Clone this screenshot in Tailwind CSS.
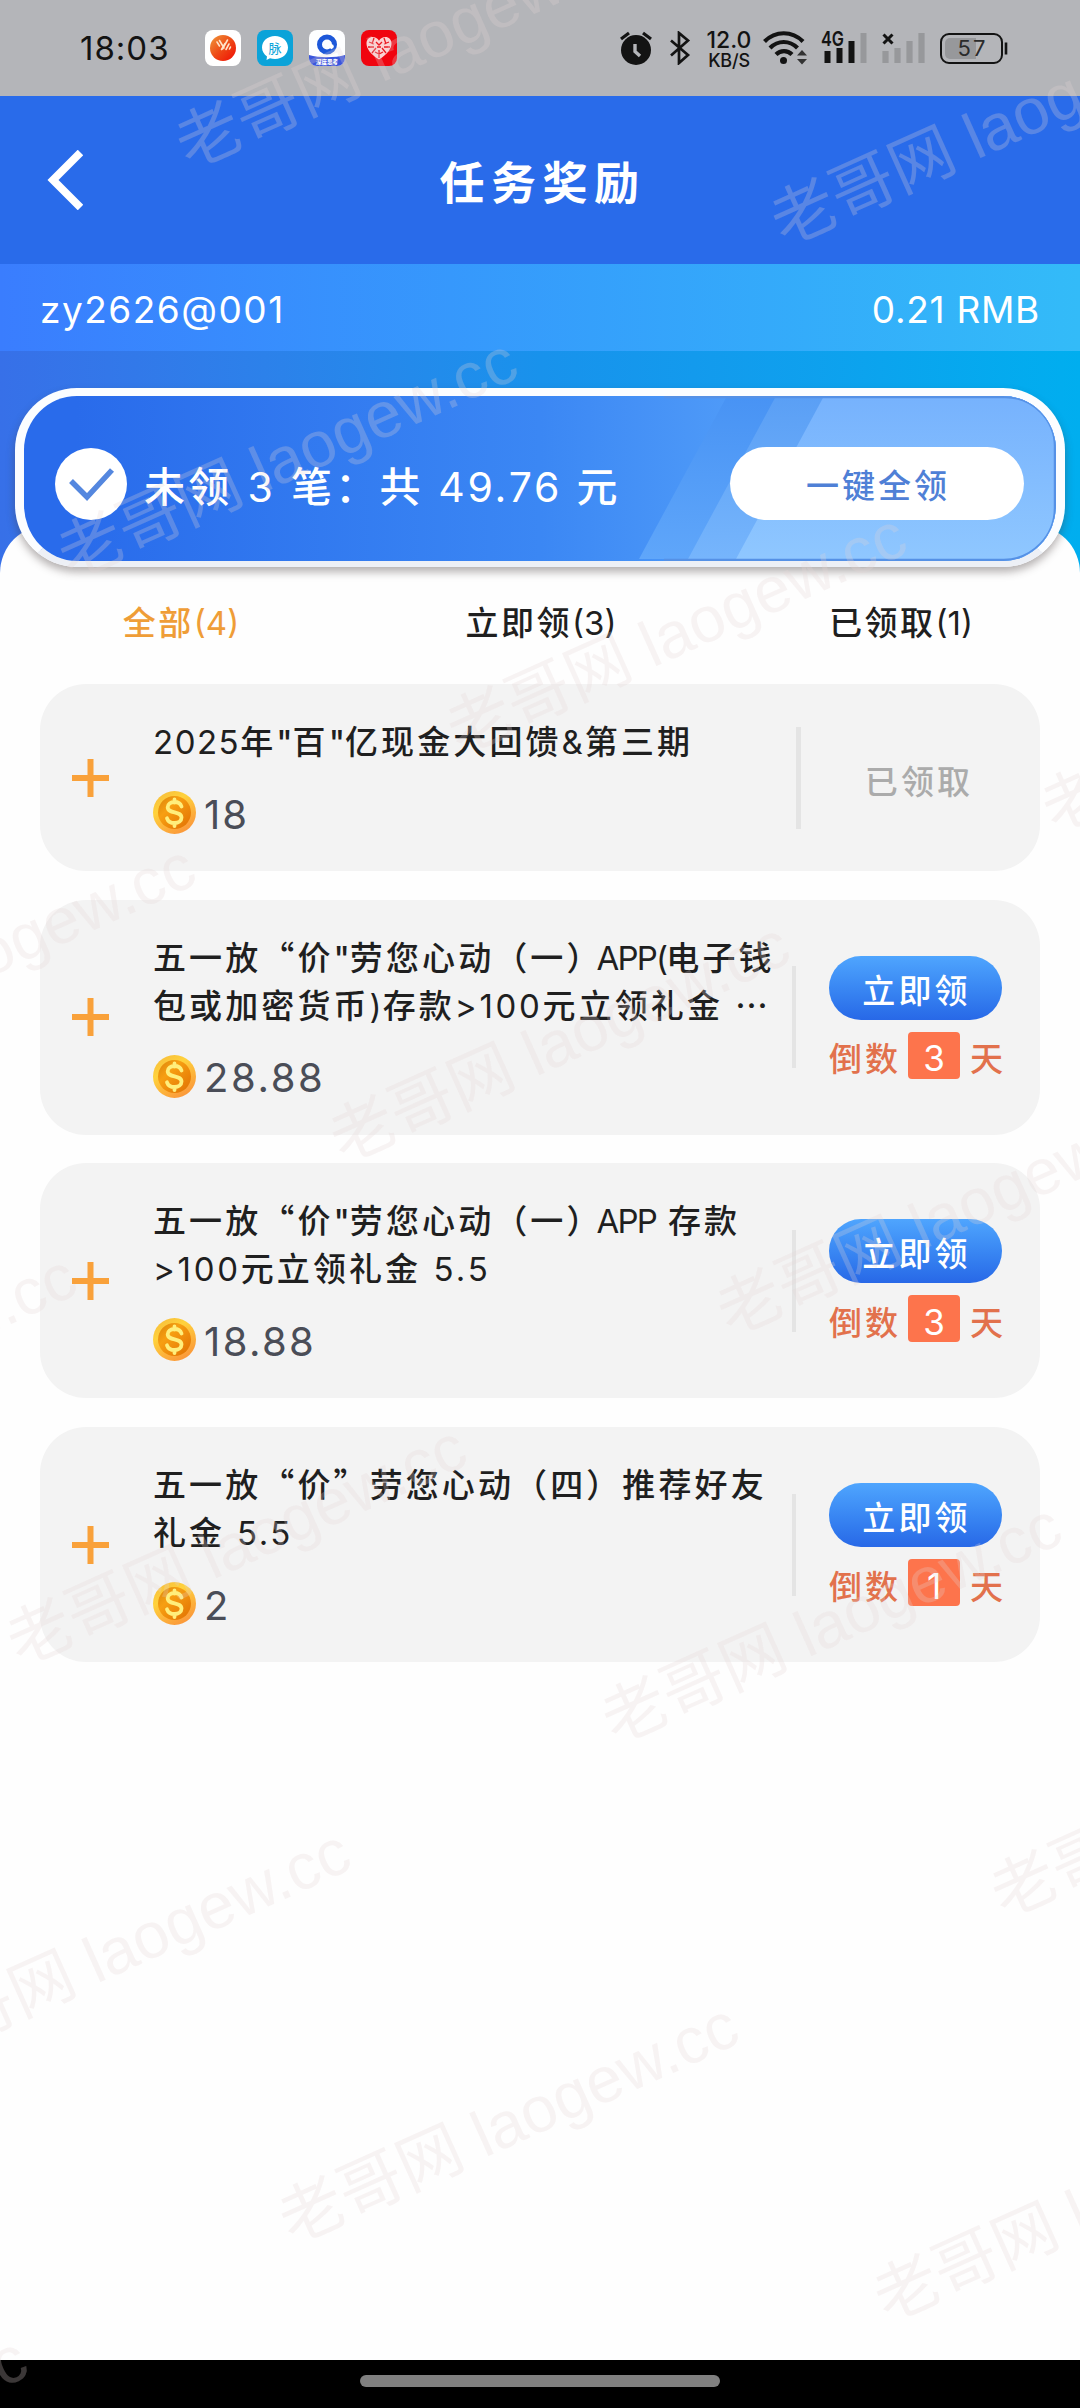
<!DOCTYPE html>
<html lang="zh-CN">
<head>
<meta charset="utf-8">
<title>任务奖励</title>
<script src="https://cdn.jsdelivr.net/npm/@tailwindcss/browser@4"></script>
</head>
<body class="relative flex h-[2408px] w-[1080px] flex-col overflow-hidden bg-[#fefefe] font-['Inter','Noto_Sans_CJK_SC',sans-serif] text-[#1f1f1f]">
<svg class="absolute h-0 w-0">
  <defs>
    <linearGradient id="rim" x1="0" y1="0" x2="0.6" y2="1"><stop offset="0" stop-color="#f5b83a"/><stop offset=".4" stop-color="#ffd23c"/><stop offset="1" stop-color="#fb9a3a"/></linearGradient>
    <linearGradient id="face" x1="0" y1="0" x2="1" y2="1"><stop offset="0" stop-color="#d9840a"/><stop offset=".35" stop-color="#f79f12"/><stop offset="1" stop-color="#e06f02"/></linearGradient>
    <symbol id="coin" viewBox="0 0 43 43">
      <circle cx="21.5" cy="21.5" r="21.5" fill="url(#rim)"/>
      <circle cx="21.5" cy="21.5" r="16.5" fill="url(#face)"/>
      <path d="M28.5 15.500c-1-3-3.800-4.500-7-4.500-4 0-6.800 2-6.800 5.200 0 7 13.800 3.300 13.800 10.400 0 3.300-2.900 5.400-7 5.400-3.800 0-6.500-1.700-7.500-4.700M21.500 8.500v3M21.500 32v3" fill="none" stroke="#ffee7c" stroke-width="3.800" stroke-linecap="round"/>
    </symbol>
    <symbol id="plus" viewBox="0 0 37 38"><path d="M18.500 0v38M0 19h37" stroke="#f9a13a" stroke-width="6"/></symbol>
  </defs>
</svg>

<!-- status bar -->
<div class="flex h-24 shrink-0 items-start bg-[#b4b5b9] text-[#131313]">
  <div class="ml-[80px] mt-[28px] w-[125px] text-[33px] leading-10 font-normal tracking-[1px]">18:03</div>
  <div class="mt-[30px] flex gap-4">
    <svg class="h-9 w-9" viewBox="0 0 36 36"><defs><linearGradient id="ball" x1="0" y1="0" x2="1" y2="1"><stop offset="0" stop-color="#f09a3c"/><stop offset=".5" stop-color="#ee4a16"/><stop offset="1" stop-color="#f00c04"/></linearGradient></defs><rect width="36" height="36" rx="8" fill="#fff"/><circle cx="18" cy="18" r="13" fill="url(#ball)"/><path d="M12 12l2.500 4M14.500 10.500l4.500 7.500M20 13.500l-3.500 6M22.500 10l-5 9M24 14l-3 5.500M25.500 17l-1 2" stroke="#ffe3c8" stroke-width="1.600" stroke-linecap="round"/></svg>
    <svg class="h-9 w-9" viewBox="0 0 36 36"><rect width="36" height="36" rx="8" fill="#0ba3d9"/><path d="M18 6c7.500 0 13 5 13 11.500S25.500 29 18 29c-1.800 0-3.500-.3-5-.8L9.500 30l.5-3.500C7 24.300 5 21.300 5 17.500 5 11 10.500 6 18 6z" fill="#fff"/><text x="18" y="22.500" text-anchor="middle" font-size="13" fill="#0ba3d9" font-family="Noto Sans CJK SC">脉</text></svg>
    <svg class="h-9 w-9" viewBox="0 0 36 36"><defs><clipPath id="tile"><rect width="36" height="36" rx="8"/></clipPath></defs><g clip-path="url(#tile)"><rect width="36" height="36" fill="#fdfeff"/><path d="M0 25c10 3 26 3 36 0v11H0z" fill="#3a55dc"/></g><circle cx="18" cy="14.500" r="7.500" fill="none" stroke="#1c57d9" stroke-width="5"/><path d="M18 14.500h5v5z" fill="#fff"/><circle cx="22.500" cy="16.500" r="2.300" fill="#fff"/><text x="18" y="33.500" text-anchor="middle" font-size="5.500" font-weight="900" fill="#fff" font-family="Noto Sans CJK SC">深度思考</text></svg>
    <svg class="h-9 w-9" viewBox="0 0 36 36"><rect width="36" height="36" rx="8" fill="#f0040f"/><path d="M18 29.500C9 24 5.500 18 5.500 13.500c0-4 2.800-6.500 6-6.500 2.800 0 5 1.300 6.500 3.700C19.500 8.300 21.700 7 24.500 7c3.200 0 6 2.500 6 6.500 0 4.500-3.500 10.500-12.500 16z" fill="#fbd3d3"/><path d="M8 12l5 2M13 8l-2 6M23 8l2 6M28 12l-5 2M7 17h6M29 17h-6M11 23l4-5M25 23l-4-5M15 12l3 3 3-3M18 20v8M14 22l4 2 4-2M16 17h4" stroke="#ea1a22" stroke-width="1.300" fill="none"/></svg>
  </div>
  <svg class="ml-[223px] mt-[31px] h-9 w-8" viewBox="0 0 32 36"><circle cx="16" cy="19" r="15" fill="#131313"/><path d="M1 8l8-6M31 8l-8-6" stroke="#131313" stroke-width="3.200"/><path d="M15 13v7.500l5 4.500" fill="none" stroke="#b4b5b9" stroke-width="3.400"/></svg>
  <svg class="ml-[17px] mt-[31px] h-[34px] w-[22px]" viewBox="0 0 22 34"><path d="M2 9.500l17 14.500-9 8V2l9 7.500L2 24.500" fill="none" stroke="#131313" stroke-width="2.700"/></svg>
  <div class="ml-[15px] mt-[29px] flex w-[46px] flex-col items-center">
    <span class="text-[23px] leading-[23px] font-medium">12.0</span><span class="text-[18px] leading-[18px] font-medium tracking-[-0.2px]">KB/S</span>
  </div>
  <svg class="ml-[11px] mt-[31px] h-[34px] w-[45px]" viewBox="0 0 45 34"><path d="M1.500 10.500c11-11 27.500-11 38.500 0M7 17c8-8 19.500-8 27.500 0M13 23.500c4.500-4.500 11.500-4.500 16 0" fill="none" stroke="#131313" stroke-width="4.200"/><circle cx="20.500" cy="29.500" r="3.500" fill="#131313"/><path d="M34 24.500l5-5.500 5 5.500zM34 28h10l-5 5.500z" fill="#333"/></svg>
  <svg class="ml-[13px] mt-[31px] h-8 w-[46px]" viewBox="0 0 46 32"><text x="0" y="15" font-size="20.500" font-weight="600" textLength="23" lengthAdjust="spacingAndGlyphs" fill="#131313" font-family="Inter">4G</text><path d="M6.500 20v12M18.500 17v15M30.500 10v22" stroke="#131313" stroke-width="6"/><path d="M42.500 2v30" stroke="#97989b" stroke-width="6"/></svg>
  <svg class="ml-[15px] mt-[31px] h-8 w-[44px]" viewBox="0 0 44 32"><path d="M1.500 3.500l9 9M10.500 3.500l-9 9" stroke="#131313" stroke-width="3"/><path d="M3.500 20v12M15.500 17v15M27.500 10v22M39.500 2v30" stroke="#97989b" stroke-width="6.200"/></svg>
  <svg class="ml-[14px] mt-[33px] h-[31px] w-[68px]" viewBox="0 0 68 31"><rect x="1" y="1" width="61" height="29" rx="8" fill="none" stroke="#131313" stroke-width="2"/><path d="M10 5h26v21H10a5 5 0 01-5-5V10a5 5 0 015-5z" fill="#97989b"/><path d="M66 9.500v12" stroke="#131313" stroke-width="2.600"/><text x="31.500" y="23" text-anchor="middle" font-size="22" textLength="28" fill="#2b2b2b" font-family="Inter">57</text></svg>
</div>

<!-- title bar -->
<div class="grid h-[168px] shrink-0 grid-cols-[1fr_auto_1fr] items-start bg-[#296bea] text-white">
  <svg class="ml-[47px] mt-[54px] h-[60px] w-9" viewBox="0 0 36 60"><path d="M33.500 2.500L6 30l27.500 27.500" fill="none" stroke="#fff" stroke-width="7.800"/></svg>
  <h1 class="mt-[58px] pl-[5px] text-[45px] leading-[60px] font-bold tracking-[6.500px]">任务奖励</h1>
</div>

<!-- account -->
<div class="flex h-[87px] shrink-0 items-center justify-between bg-linear-to-r from-[#3a7dfe] to-[#33bbf8] px-10 pt-[5px] text-[37px] text-white">
  <span class="tracking-[1.500px]">zy2626@001</span><span class="tracking-[0.7px]">0.21 RMB</span>
</div>

<!-- one-tap claim -->
<div class="h-[222px] shrink-0 bg-linear-to-r from-[#3770e8] via-[#1892ec] to-[#00aeef]">
  <div class="flex h-full flex-col pt-[37px]">
    <div class="relative z-10 mx-[15px] flex h-[179px] shrink-0 items-center overflow-hidden rounded-[62px] border-x-[9px] border-t-8 border-b-[6px] border-[#fbfdff] border-b-[#edf0f6] bg-linear-to-r from-[#296beb] from-5% via-[#3b87f4] via-50% to-[#5ba6fa] to-80% shadow-[0_5px_9px_rgba(70,60,60,0.4)]">
      <svg class="absolute inset-0 h-full w-full" viewBox="0 0 1032 165" preserveAspectRatio="none">
        <defs>
          <linearGradient id="s1" x1="0" y1="0" x2="0" y2="1"><stop offset="0" stop-color="#4893f4"/><stop offset="1" stop-color="#5fa6fa"/></linearGradient>
          <linearGradient id="s2" x1="0" y1="0" x2="0" y2="1"><stop offset="0" stop-color="#5a9ff5"/><stop offset="1" stop-color="#76b5fc"/></linearGradient>
          <linearGradient id="s3" x1="0" y1="0" x2="0" y2="1"><stop offset="0" stop-color="#76b2fd"/><stop offset="1" stop-color="#8fc7ff"/></linearGradient>
        </defs>
        <path d="M615 163L703 0h330v163z" fill="url(#s1)"/><path d="M664 163L752 0h281v163z" fill="url(#s2)"/><path d="M712 163L800 0h233v163z" fill="url(#s3)"/>
        <path d="M640 1h340a50 50 0 0151 52v59a52 52 0 01-51 52H640" fill="none" stroke="#5591e6" stroke-width="2.500"/>
      </svg>
      <svg class="relative ml-[31px] mt-[10px] h-[72px] w-[72px]" viewBox="0 0 72 72"><circle cx="36" cy="36" r="36" fill="#fff"/><path d="M16 33l16 16 25-27" fill="none" stroke="#5487df" stroke-width="5.500"/></svg>
      <div class="relative mt-[16px] ml-[17px] w-[586px] text-[41px] leading-[48px] font-medium tracking-[3.300px] whitespace-pre text-white">未领<span class="font-normal"> 3 </span>笔：共<span class="font-normal tracking-[2.800px]"> 49.76 </span>元</div>
      <button class="relative mt-[10px] flex h-[73px] w-[294px] items-center justify-center rounded-full bg-white pt-1.5 pl-0.5 text-[33px] font-medium tracking-[3px] text-[#4f80d6]">一键全领</button>
    </div>
    <div class="-mt-[42px] h-[200px] shrink-0 rounded-t-[48px] bg-[#fefefe]"></div>
  </div>
</div>

<!-- filter tabs -->
<div class="relative grid h-[111px] shrink-0 grid-cols-3 bg-[#fefefe] pt-[26px] text-center text-[33px] leading-[48px] font-medium tracking-[2.500px]">
  <div class="pl-0.5 text-[#ef9d37]">全部<span class="font-normal tracking-normal">(4)</span></div>
  <div class="pl-0.5">立即领<span class="font-normal tracking-normal">(3)</span></div>
  <div class="pl-0.5">已领取<span class="font-normal tracking-normal">(1)</span></div>
</div>

<!-- rewards -->
<div class="relative flex flex-1 flex-col gap-[28.700px] bg-[#fefefe] px-10 text-[33px] leading-[48px] font-medium tracking-[3.100px]">
  <div class="flex h-[187px] items-center rounded-[46px] bg-[#f3f3f3]">
    <svg class="ml-8 h-[38px] w-[37px]"><use href="#plus"/></svg>
    <div class="ml-11 h-full w-[643px] pt-[34px] whitespace-nowrap">
      <div class="h-[49px]"><span class="font-normal tracking-[1.500px]">2025</span>年<span class="tracking-normal">"</span>百<span class="tracking-normal">"</span>亿现金大回馈<span class="font-normal tracking-[2px]">&amp;</span>第三期</div>
      <div class="mt-6 flex h-[43px] items-center gap-2"><svg class="size-[43px]"><use href="#coin"/></svg><span class="pt-1 text-[40px] font-normal tracking-[2px] text-[#4a4d57]">18</span></div>
    </div>
    <div class="h-[102px] w-[5px] bg-[#e4e4e4]"></div>
    <div class="w-[236px] pt-2 text-center text-[#ababab]">已领取</div>
  </div>

  <div class="flex h-[235px] items-center rounded-[46px] bg-[#f3f3f3]">
    <svg class="ml-8 h-[38px] w-[37px]"><use href="#plus"/></svg>
    <div class="ml-11 h-full w-[639px] pt-[34px] whitespace-nowrap">
      <div class="h-12">五一放<span class="font-['Noto_Sans_CJK_SC'] leading-none">“</span>价<span class="tracking-normal">"</span>劳您心动（一）<span class="-ml-1.5 font-normal tracking-[-1.800px]">APP(</span>电子钱</div>
      <div class="h-[49px]">包或加密货币<span class="font-normal tracking-[1px]">)</span>存款<span class="font-normal tracking-[2.700px]">&gt;100</span>元立领礼金 <span class="font-['Noto_Sans_CJK_SC'] leading-none">⋯</span></div>
      <div class="mt-6 flex h-[43px] items-center gap-2"><svg class="size-[43px]"><use href="#coin"/></svg><span class="pt-1 text-[40px] font-normal tracking-[2.600px] text-[#4a4d57]">28.88</span></div>
    </div>
    <div class="h-[102px] w-1 bg-[#e4e4e4]"></div>
    <div class="ml-[33px] flex h-full w-[180px] flex-col pt-14">
      <button class="flex h-16 w-[173px] items-center justify-center rounded-full bg-linear-to-b from-[#4fa5fe] to-[#2868e7] pt-1.5 pl-0.5 text-white">立即领</button>
      <div class="mt-3 flex h-[47px] items-center text-[#e2714c]"><span class="w-[79px] shrink-0 pt-2">倒数</span><span class="flex h-full w-[52px] shrink-0 items-center justify-center rounded bg-[#fd744c] pt-1.5 text-[35px] font-normal tracking-normal text-white">3</span><span class="shrink-0 pt-2 pl-[10px]">天</span></div>
    </div>
  </div>

  <div class="flex h-[235px] items-center rounded-[46px] bg-[#f3f3f3]">
    <svg class="ml-8 h-[38px] w-[37px]"><use href="#plus"/></svg>
    <div class="ml-11 h-full w-[639px] pt-[34px] whitespace-nowrap">
      <div class="h-12">五一放<span class="font-['Noto_Sans_CJK_SC'] leading-none">“</span>价<span class="tracking-normal">"</span>劳您心动（一）<span class="-ml-1.5 font-normal tracking-[-1.800px]">APP</span> 存款</div>
      <div class="h-[49px]"><span class="font-normal tracking-[2.700px]">&gt;100</span>元立领礼金<span class="font-normal tracking-[3px]"> 5.5</span></div>
      <div class="mt-6 flex h-[43px] items-center gap-2"><svg class="size-[43px]"><use href="#coin"/></svg><span class="pt-1 text-[40px] font-normal tracking-[2.400px] text-[#4a4d57]">18.88</span></div>
    </div>
    <div class="h-[102px] w-1 bg-[#e4e4e4]"></div>
    <div class="ml-[33px] flex h-full w-[180px] flex-col pt-14">
      <button class="flex h-16 w-[173px] items-center justify-center rounded-full bg-linear-to-b from-[#4fa5fe] to-[#2868e7] pt-1.5 pl-0.5 text-white">立即领</button>
      <div class="mt-3 flex h-[47px] items-center text-[#e2714c]"><span class="w-[79px] shrink-0 pt-2">倒数</span><span class="flex h-full w-[52px] shrink-0 items-center justify-center rounded bg-[#fd744c] pt-1.5 text-[35px] font-normal tracking-normal text-white">3</span><span class="shrink-0 pt-2 pl-[10px]">天</span></div>
    </div>
  </div>

  <div class="flex h-[235px] items-center rounded-[46px] bg-[#f3f3f3]">
    <svg class="ml-8 h-[38px] w-[37px]"><use href="#plus"/></svg>
    <div class="ml-11 h-full w-[639px] pt-[34px] whitespace-nowrap">
      <div class="h-12">五一放<span class="font-['Noto_Sans_CJK_SC'] leading-none">“</span>价<span class="font-['Noto_Sans_CJK_SC'] leading-none">”</span>劳您心动（四）推荐好友</div>
      <div class="h-[49px]">礼金<span class="font-normal tracking-[2.500px]"> 5.5</span></div>
      <div class="mt-6 flex h-[43px] items-center gap-2"><svg class="size-[43px]"><use href="#coin"/></svg><span class="pt-1 text-[40px] font-normal tracking-[2px] text-[#4a4d57]">2</span></div>
    </div>
    <div class="h-[102px] w-1 bg-[#e4e4e4]"></div>
    <div class="ml-[33px] flex h-full w-[180px] flex-col pt-14">
      <button class="flex h-16 w-[173px] items-center justify-center rounded-full bg-linear-to-b from-[#4fa5fe] to-[#2868e7] pt-1.5 pl-0.5 text-white">立即领</button>
      <div class="mt-3 flex h-[47px] items-center text-[#e2714c]"><span class="w-[79px] shrink-0 pt-2">倒数</span><span class="flex h-full w-[52px] shrink-0 items-center justify-center rounded bg-[#fd744c] pt-1.5 text-[35px] font-normal tracking-normal text-white">1</span><span class="shrink-0 pt-2 pl-[10px]">天</span></div>
    </div>
  </div>
</div>

<!-- gesture bar -->
<div class="relative flex h-12 shrink-0 justify-center bg-black pt-[15px]"><div class="h-3 w-[360px] rounded-full bg-[#808080]"></div></div>

<!-- watermark layer -->
<svg class="pointer-events-none absolute inset-0 z-20 h-[2408px] w-[1080px]" viewBox="0 0 1080 2408" font-family="Liberation Sans, Noto Sans CJK SC, sans-serif" font-size="64.500" fill="rgb(228,214,214)" fill-opacity=".26">
  <text transform="translate(209 134) rotate(-24.200)" x="-33" y="24">老哥网 laogew.cc</text>
  <text transform="translate(804 211) rotate(-24.200)" x="-33" y="24">老哥网 laogew.cc</text>
  <text transform="translate(91 544) rotate(-24.200)" x="-33" y="24">老哥网 laogew.cc</text>
  <text transform="translate(480 719) rotate(-24.200)" x="-33" y="24">老哥网 laogew.cc</text>
  <text transform="translate(1075 798) rotate(-24.200)" x="-33" y="24">老哥网 laogew.cc</text>
  <text transform="translate(-231 1050) rotate(-24.200)" x="-33" y="24">老哥网 laogew.cc</text>
  <text transform="translate(363 1128) rotate(-24.200)" x="-33" y="24">老哥网 laogew.cc</text>
  <text transform="translate(750 1301) rotate(-24.200)" x="-33" y="24">老哥网 laogew.cc</text>
  <text transform="translate(-350 1460) rotate(-24.200)" x="-33" y="24">老哥网 laogew.cc</text>
  <text transform="translate(40 1631) rotate(-24.200)" x="-33" y="24">老哥网 laogew.cc</text>
  <text transform="translate(635 1709) rotate(-24.200)" x="-33" y="24">老哥网 laogew.cc</text>
  <text transform="translate(1024 1883) rotate(-24.200)" x="-33" y="24">老哥网 laogew.cc</text>
  <text transform="translate(-76 2035) rotate(-24.200)" x="-33" y="24">老哥网 laogew.cc</text>
  <text transform="translate(312 2209) rotate(-24.200)" x="-33" y="24">老哥网 laogew.cc</text>
  <text transform="translate(907 2287) rotate(-24.200)" x="-33" y="24">老哥网 laogew.cc</text>
  <text transform="translate(-399 2542) rotate(-24.200)" x="-33" y="24">老哥网 laogew.cc</text>
</svg>
</body>
</html>
